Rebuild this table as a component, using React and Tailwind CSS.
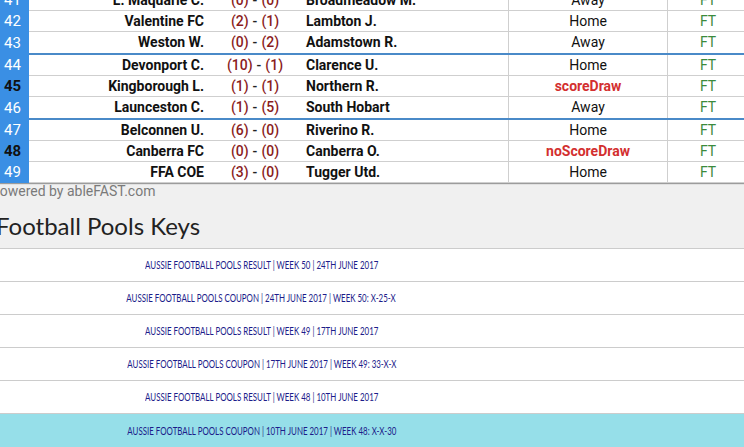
import React from "react";

const rows = [
  { n: 41, h: "L. Maquarie C.", s: ["0", "0"], a: "Broadmeadow M.", r: "Away" },
  { n: 42, h: "Valentine FC", s: ["2", "1"], a: "Lambton J.", r: "Home" },
  { n: 43, h: "Weston W.", s: ["0", "2"], a: "Adamstown R.", r: "Away", sep: true },
  { n: 44, h: "Devonport C.", s: ["10", "1"], a: "Clarence U.", r: "Home" },
  { n: 45, h: "Kingborough L.", s: ["1", "1"], a: "Northern R.", r: "scoreDraw", bold: true },
  { n: 46, h: "Launceston C.", s: ["1", "5"], a: "South Hobart", r: "Away", sep: true },
  { n: 47, h: "Belconnen U.", s: ["6", "0"], a: "Riverino R.", r: "Home" },
  { n: 48, h: "Canberra FC", s: ["0", "0"], a: "Canberra O.", r: "noScoreDraw", bold: true },
  { n: 49, h: "FFA COE", s: ["3", "0"], a: "Tugger Utd.", r: "Home" },
];

const links = [
  "AUSSIE FOOTBALL POOLS RESULT | WEEK 50 | 24TH JUNE 2017",
  "AUSSIE FOOTBALL POOLS COUPON | 24TH JUNE 2017 | WEEK 50: X-25-X",
  "AUSSIE FOOTBALL POOLS RESULT | WEEK 49 | 17TH JUNE 2017",
  "AUSSIE FOOTBALL POOLS COUPON | 17TH JUNE 2017 | WEEK 49: 33-X-X",
  "AUSSIE FOOTBALL POOLS RESULT | WEEK 48 | 10TH JUNE 2017",
  "AUSSIE FOOTBALL POOLS COUPON | 10TH JUNE 2017 | WEEK 48: X-X-30",
];

function Row({ row }) {
  const isDraw = row.r === "scoreDraw" || row.r === "noScoreDraw";
  return (
    <div className={row.sep ? "flex h-[23px]" : "flex h-[21px]"}>
      <div
        className={
          row.bold
            ? "w-[29px] shrink-0 bg-[#3a8fe4] pl-[4px] flex items-center text-[15px] font-bold text-[#111]"
            : "w-[29px] shrink-0 bg-[#3a8fe4] pl-[4px] flex items-center text-[15px] text-white"
        }
      >
        {row.n}
      </div>
      <div
        className={
          row.sep
            ? "flex flex-1 bg-white border-b-2 border-[#4a8ac8]"
            : "flex flex-1 bg-white border-b border-[#cfcfcf]"
        }
      >
        <div className="w-[181px] shrink-0 pr-[6px] flex items-center justify-end font-bold text-[14px] text-[#111]">
          {row.h}
        </div>
        <div className="w-[90px] shrink-0 flex items-center justify-center text-[14px] font-medium">
          <span className="text-[#8a1c1c]">({row.s[0]})</span>
          <span className="text-[#222] px-[4px]">-</span>
          <span className="text-[#8a1c1c]">({row.s[1]})</span>
        </div>
        <div className="w-[208px] shrink-0 pl-[6px] flex items-center font-bold text-[14px] text-[#111]">
          {row.a}
        </div>
        <div
          className={
            isDraw
              ? "w-[160px] shrink-0 border-l border-r border-[#cfcfcf] flex items-center justify-center font-bold text-[14px] text-[#d32f2f]"
              : "w-[160px] shrink-0 border-l border-r border-[#cfcfcf] flex items-center justify-center text-[14px] text-[#111]"
          }
        >
          {row.r}
        </div>
        <div className="w-[80px] shrink-0 flex items-center justify-center text-[14px] text-[#3c8a3c]">
          FT
        </div>
      </div>
    </div>
  );
}

export default function App() {
  return (
    <div
      className="w-[744px] h-[447px] overflow-hidden bg-[#f0f0f0]"
      style={{ fontFamily: "Roboto, 'Liberation Sans', sans-serif" }}
    >
      <div className="-mt-[10px] w-[748px] shadow-[0_1px_1px_rgba(0,0,0,0.35)]">
        {rows.map((r) => (
          <Row key={r.n} row={r} />
        ))}
      </div>
      <div className="h-[65px] flex flex-col">
        <div className="-ml-[9px] text-[14px] leading-[16px] text-[#7a7a7a]">
          Powered by ableFAST.com
        </div>
        <div
          className="-ml-[4px] mt-[12px] text-[24px] leading-[30px] text-[#222]"
          style={{ fontFamily: "Lato, 'Liberation Sans', sans-serif" }}
        >
          Football Pools Keys
        </div>
      </div>
      <div
        className="border-t border-[#cccccc]"
        style={{ fontFamily: "Lato, 'Liberation Sans', sans-serif" }}
      >
        {links.map((l, i) => (
          <div
            key={i}
            className={
              i === links.length - 1
                ? "h-[33px] bg-[#96dfe9] flex items-center"
                : "h-[33px] bg-white border-b border-[#cccccc] flex items-center"
            }
          >
            <div className="w-[523px] text-center text-[12px] text-[#1c1c8a]">
              <span className="inline-block scale-x-[0.66]">{l}</span>
            </div>
          </div>
        ))}
      </div>
    </div>
  );
}
